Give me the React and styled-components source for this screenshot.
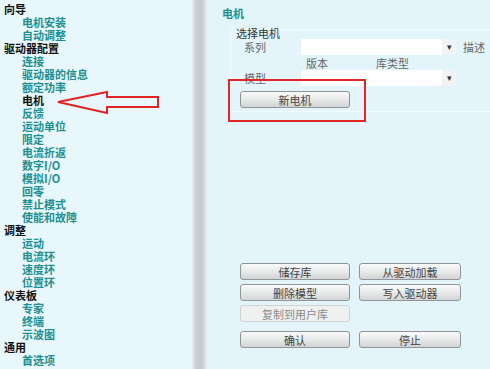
import React from 'react'
import styled, { createGlobalStyle } from 'styled-components'

const GlobalStyle = createGlobalStyle`
  html, body {
    margin: 0;
    padding: 0;
    background: #e3f5fb;
  }
  body {
    font-family: "Noto Sans CJK SC", "Liberation Sans", sans-serif;
    font-size: 11px;
  }
`

const tree = [
  { title: '向导', items: ['电机安装', '自动调整'] },
  {
    title: '驱动器配置',
    items: ['连接', '驱动器的信息', '额定功率', '电机', '反馈', '运动单位', '限定', '电流折返', '数字I/O', '模拟I/O', '回零', '禁止模式', '使能和故障']
  },
  { title: '调整', items: ['运动', '电流环', '速度环', '位置环'] },
  { title: '仪表板', items: ['专家', '终端', '示波图'] },
  { title: '通用', items: ['首选项'] }
]

const actions = [
  { id: 1, label: '储存库' },
  { id: 2, label: '从驱动加载' },
  { id: 3, label: '删除模型' },
  { id: 4, label: '写入驱动器' },
  { id: 5, label: '复制到用户库', disabled: true },
  { id: 6, label: '', empty: true },
  { id: 7, label: '确认', last: true },
  { id: 8, label: '停止', last: true }
]

const App = () => (
  <>
    <GlobalStyle />
    <Screen>
      <Sidebar>
        {tree.map(group => (
          <React.Fragment key={group.title}>
            <Heading>{group.title}</Heading>
            {group.items.map(item => (
              <NavItem key={item} active={item === '电机'}>
                {item}
              </NavItem>
            ))}
          </React.Fragment>
        ))}
        <Arrow width="110" height="26" viewBox="0 0 110 26">
          <polygon
            points="2,12 51,2 51,7 102,7 102,17 51,17 51,23"
            fill="none"
            stroke="#e32222"
            strokeWidth="2"
          />
        </Arrow>
      </Sidebar>
      <Divider />
      <Main>
        <Title>电机</Title>
        <GroupBox>
          <Legend>选择电机</Legend>
          <FieldRow>
            <Label>系列</Label>
            <Combo>
              <ComboArrow>▾</ComboArrow>
            </Combo>
            <Aside>描述</Aside>
          </FieldRow>
          <SubRow>
            <SubLabel>版本</SubLabel>
            <SubLabel>库类型</SubLabel>
          </SubRow>
          <FieldRow>
            <Label>模型</Label>
            <Combo>
              <ComboArrow>▾</ComboArrow>
            </Combo>
          </FieldRow>
          <NewButton>新电机</NewButton>
        </GroupBox>
        <Highlight />
        <Actions>
          {actions.map(({ id, label, disabled, empty, last }) =>
            empty ? (
              <span key={id} />
            ) : (
              <Button key={id} disabled={disabled} last={last}>
                {label}
              </Button>
            )
          )}
        </Actions>
      </Main>
    </Screen>
  </>
)

const Screen = styled.div`
  display: flex;
  width: 490px;
  height: 369px;
  overflow: hidden;
`

const Sidebar = styled.div`
  position: relative;
  width: 192px;
  flex-shrink: 0;
  padding-top: 3px;
  background: #e7f7fc;
  box-sizing: border-box;
`

const Heading = styled.div`
  height: 13px;
  line-height: 13px;
  padding-left: 4px;
  font-weight: bold;
  color: #111;
`

const NavItem = styled.div`
  height: 13px;
  line-height: 13px;
  padding-left: 22px;
  font-weight: bold;
  color: ${p => (p.active ? '#111' : '#1c8f92')};
`

const Arrow = styled.svg`
  position: absolute;
  left: 56px;
  top: 90px;
`

const Divider = styled.div`
  width: 15px;
  flex-shrink: 0;
  background: linear-gradient(
    to right,
    #e9eef0 0%,
    #c9d0d3 25%,
    #c3cacd 60%,
    #d6dcdf 85%,
    #eef3f5 100%
  );
`

const Main = styled.div`
  position: relative;
  flex: 1;
  display: flex;
  flex-direction: column;
  background: #e3f5fb;
`

const Title = styled.div`
  margin-top: 6px;
  padding-left: 15px;
  height: 14px;
  line-height: 14px;
  font-weight: bold;
  color: #1c8f92;
`

const GroupBox = styled.div`
  margin: 9px -4px 0 23px;
  padding: 0 0 3px 9px;
  border: 1px solid #f2fbfe;
  display: flex;
  flex-direction: column;
  align-items: flex-start;
`

const Legend = styled.div`
  margin: -4px 0 0 -4px;
  height: 14px;
  line-height: 14px;
  color: #333;
`

const FieldRow = styled.div`
  display: flex;
  align-items: center;
  height: 17px;
  margin-top: -2px;
  &:nth-of-type(3) {
    margin-top: 0;
  }
`

const Label = styled.div`
  width: 61px;
  padding-left: 4px;
  box-sizing: border-box;
  color: #666;
`

const Combo = styled.div`
  position: relative;
  width: 155px;
  height: 16px;
  background: #fff;
`

const ComboArrow = styled.span`
  position: absolute;
  right: 0;
  top: 0;
  width: 14px;
  height: 16px;
  line-height: 16px;
  text-align: center;
  font-size: 9px;
  color: #333;
  background: #f1f3f4;
`

const Aside = styled.div`
  margin-left: 7px;
  color: #666;
  white-space: nowrap;
`

const SubRow = styled.div`
  display: flex;
  height: 16px;
  line-height: 16px;
  padding-left: 66px;
`

const SubLabel = styled.div`
  width: 70px;
  color: #666;
`

const Button = styled.div`
  height: 17px;
  line-height: 16px;
  box-sizing: border-box;
  text-align: center;
  border-radius: 3px;
  border: 1px solid ${p => (p.disabled ? '#cfd3d4' : '#8f9598')};
  background: ${p =>
    p.disabled
      ? '#eff1f1'
      : 'linear-gradient(to bottom, #fafafa 0%, #e6e7e7 55%, #d2d4d5 100%)'};
  color: ${p => (p.disabled ? '#8a8a8a' : '#444')};
  ${({ last }) => last && `margin-top: 5px;`}
`

const NewButton = styled(Button)`
  width: 110px;
  margin-top: 5px;
`

const Highlight = styled.div`
  position: absolute;
  left: 21px;
  top: 79px;
  width: 138px;
  height: 43px;
  box-sizing: border-box;
  border: 2px solid #e02626;
`

const Actions = styled.div`
  display: grid;
  grid-template-columns: 110px 102px;
  grid-auto-rows: auto;
  column-gap: 9px;
  row-gap: 4px;
  margin: 151px 0 0 33px;
`

export default App
